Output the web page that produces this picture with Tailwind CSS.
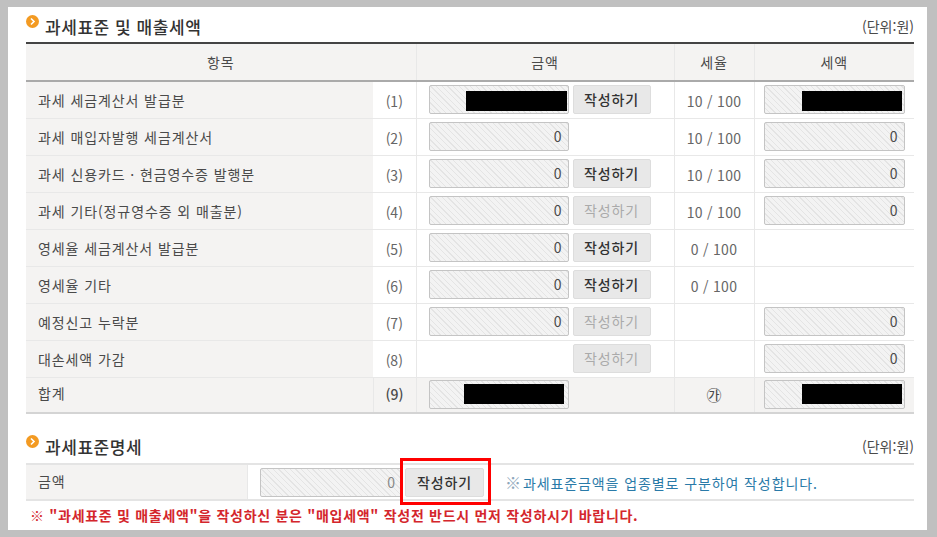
<!DOCTYPE html>
<html lang="ko">
<head>
    <meta charset="UTF-8">
    <title>과세표준 및 매출세액</title>
    <script src="https://cdn.jsdelivr.net/npm/@tailwindcss/browser@4"></script>
</head>
<body class="bg-[#c0c0c0] font-['Noto_Sans_CJK_KR','Noto_Sans',sans-serif] text-[14px] tracking-[0.9px] text-[#4a4a4a]">
    <div class="ml-2 mt-[7px] w-[919px] h-[523px] bg-white pl-[18px] pr-[13px] overflow-hidden">
        <!-- 과세표준 및 매출세액 -->
        <div class="h-[35px] flex justify-between items-end pb-[4px]">
            <div class="flex items-start">
                <svg class="w-[13px] h-[13px] mr-[6px] mt-[-1px]" viewBox="0 0 13 13"><circle cx="6.5" cy="6.5" r="6.5" fill="#f39a22"/><path d="M5 3.5 8 6.5 5 9.5" fill="none" stroke="#fff" stroke-width="1.6"/></svg>
                <h2 class="text-[17px] leading-[22px] font-medium tracking-[0.55px] text-[#333]">과세표준 및 매출세액</h2>
            </div>
            <span class="leading-[20px] tracking-normal mb-[2px]">(단위:원)</span>
        </div>
        <table class="w-[888px] table-fixed border-collapse border-t-2 border-[#444]">
            <colgroup>
                <col class="w-[347px]"><col class="w-[43px]"><col class="w-[258px]"><col class="w-[80px]"><col class="w-[160px]">
            </colgroup>
            <thead>
                <tr class="h-[38px] bg-[#f4f3f2] border-b-2 border-[#aaa] text-center">
                    <th colspan="2" class="font-normal border-r border-[#e8e8e8]">항목</th>
                    <th class="font-normal border-r border-[#e8e8e8]">금액</th>
                    <th class="font-normal border-r border-[#e8e8e8]">세율</th>
                    <th class="font-normal">세액</th>
                </tr>
            </thead>
            <tbody>
                <tr class="h-[37px] border-b border-[#e8e8e8]">
                    <td class="bg-[#f4f3f2] pl-3 pt-[2px]">과세 세금계산서 발급분</td>
                    <td class="text-center pt-[3px] tracking-normal border-r border-[#e8e8e8] text-[#666]">(1)</td>
                    <td class="border-r border-[#e8e8e8] pl-3">
                        <div class="flex gap-1">
                            <div class="relative w-[140px] h-[29px] rounded-[2px] border border-[#c4c4c4] bg-[repeating-linear-gradient(45deg,#f3f3f3,#f3f3f3_3px,#e4e4e4_3px,#e4e4e4_4px)]"><div class="absolute left-[36px] top-[5px] w-[101px] h-[20px] bg-black"></div></div>
                            <button class="w-[78px] h-[29px] rounded-[2px] border border-[#ddd] bg-[#e8e8e8] font-medium text-[#333]">작성하기</button>
                        </div>
                    </td>
                    <td class="text-center pt-[3px] tracking-[0.3px] border-r border-[#e8e8e8] text-[#666]">10 / 100</td>
                    <td class="pl-[9px]">
                        <div class="relative w-[141px] h-[29px] rounded-[2px] border border-[#c4c4c4] bg-[repeating-linear-gradient(45deg,#f3f3f3,#f3f3f3_3px,#e4e4e4_3px,#e4e4e4_4px)]"><div class="absolute left-[37px] top-[5px] w-[100px] h-[20px] bg-black"></div></div>
                    </td>
                </tr>
                <tr class="h-[37px] border-b border-[#e8e8e8]">
                    <td class="bg-[#f4f3f2] pl-3 pt-[2px]">과세 매입자발행 세금계산서</td>
                    <td class="text-center pt-[3px] tracking-normal border-r border-[#e8e8e8] text-[#666]">(2)</td>
                    <td class="border-r border-[#e8e8e8] pl-3">
                        <div class="flex gap-1">
                            <div class="w-[140px] h-[29px] leading-[26px] pr-[5px] text-right rounded-[2px] border border-[#c4c4c4] bg-[repeating-linear-gradient(45deg,#f3f3f3,#f3f3f3_3px,#e4e4e4_3px,#e4e4e4_4px)]">0</div>
                        </div>
                    </td>
                    <td class="text-center pt-[3px] tracking-[0.3px] border-r border-[#e8e8e8] text-[#666]">10 / 100</td>
                    <td class="pl-[9px]">
                        <div class="w-[141px] h-[29px] leading-[26px] pr-[5px] text-right rounded-[2px] border border-[#c4c4c4] bg-[repeating-linear-gradient(45deg,#f3f3f3,#f3f3f3_3px,#e4e4e4_3px,#e4e4e4_4px)]">0</div>
                    </td>
                </tr>
                <tr class="h-[37px] border-b border-[#e8e8e8]">
                    <td class="bg-[#f4f3f2] pl-3 pt-[2px]">과세 신용카드 · 현금영수증 발행분</td>
                    <td class="text-center pt-[3px] tracking-normal border-r border-[#e8e8e8] text-[#666]">(3)</td>
                    <td class="border-r border-[#e8e8e8] pl-3">
                        <div class="flex gap-1">
                            <div class="w-[140px] h-[29px] leading-[26px] pr-[5px] text-right rounded-[2px] border border-[#c4c4c4] bg-[repeating-linear-gradient(45deg,#f3f3f3,#f3f3f3_3px,#e4e4e4_3px,#e4e4e4_4px)]">0</div>
                            <button class="w-[78px] h-[29px] rounded-[2px] border border-[#ddd] bg-[#e8e8e8] font-medium text-[#333]">작성하기</button>
                        </div>
                    </td>
                    <td class="text-center pt-[3px] tracking-[0.3px] border-r border-[#e8e8e8] text-[#666]">10 / 100</td>
                    <td class="pl-[9px]">
                        <div class="w-[141px] h-[29px] leading-[26px] pr-[5px] text-right rounded-[2px] border border-[#c4c4c4] bg-[repeating-linear-gradient(45deg,#f3f3f3,#f3f3f3_3px,#e4e4e4_3px,#e4e4e4_4px)]">0</div>
                    </td>
                </tr>
                <tr class="h-[37px] border-b border-[#e8e8e8]">
                    <td class="bg-[#f4f3f2] pl-3 pt-[2px]">과세 기타(정규영수증 외 매출분)</td>
                    <td class="text-center pt-[3px] tracking-normal border-r border-[#e8e8e8] text-[#666]">(4)</td>
                    <td class="border-r border-[#e8e8e8] pl-3">
                        <div class="flex gap-1">
                            <div class="w-[140px] h-[29px] leading-[26px] pr-[5px] text-right rounded-[2px] border border-[#c4c4c4] bg-[repeating-linear-gradient(45deg,#f3f3f3,#f3f3f3_3px,#e4e4e4_3px,#e4e4e4_4px)]">0</div>
                            <button class="w-[78px] h-[29px] rounded-[2px] border border-[#ddd] bg-[#e8e8e8] text-[#aaa]">작성하기</button>
                        </div>
                    </td>
                    <td class="text-center pt-[3px] tracking-[0.3px] border-r border-[#e8e8e8] text-[#666]">10 / 100</td>
                    <td class="pl-[9px]">
                        <div class="w-[141px] h-[29px] leading-[26px] pr-[5px] text-right rounded-[2px] border border-[#c4c4c4] bg-[repeating-linear-gradient(45deg,#f3f3f3,#f3f3f3_3px,#e4e4e4_3px,#e4e4e4_4px)]">0</div>
                    </td>
                </tr>
                <tr class="h-[37px] border-b border-[#e8e8e8]">
                    <td class="bg-[#f4f3f2] pl-3 pt-[2px]">영세율 세금계산서 발급분</td>
                    <td class="text-center pt-[3px] tracking-normal border-r border-[#e8e8e8] text-[#666]">(5)</td>
                    <td class="border-r border-[#e8e8e8] pl-3">
                        <div class="flex gap-1">
                            <div class="w-[140px] h-[29px] leading-[26px] pr-[5px] text-right rounded-[2px] border border-[#c4c4c4] bg-[repeating-linear-gradient(45deg,#f3f3f3,#f3f3f3_3px,#e4e4e4_3px,#e4e4e4_4px)]">0</div>
                            <button class="w-[78px] h-[29px] rounded-[2px] border border-[#ddd] bg-[#e8e8e8] font-medium text-[#333]">작성하기</button>
                        </div>
                    </td>
                    <td class="text-center pt-[3px] tracking-[0.3px] border-r border-[#e8e8e8] text-[#666]">0 / 100</td>
                    <td></td>
                </tr>
                <tr class="h-[37px] border-b border-[#e8e8e8]">
                    <td class="bg-[#f4f3f2] pl-3 pt-[2px]">영세율 기타</td>
                    <td class="text-center pt-[3px] tracking-normal border-r border-[#e8e8e8] text-[#666]">(6)</td>
                    <td class="border-r border-[#e8e8e8] pl-3">
                        <div class="flex gap-1">
                            <div class="w-[140px] h-[29px] leading-[26px] pr-[5px] text-right rounded-[2px] border border-[#c4c4c4] bg-[repeating-linear-gradient(45deg,#f3f3f3,#f3f3f3_3px,#e4e4e4_3px,#e4e4e4_4px)]">0</div>
                            <button class="w-[78px] h-[29px] rounded-[2px] border border-[#ddd] bg-[#e8e8e8] font-medium text-[#333]">작성하기</button>
                        </div>
                    </td>
                    <td class="text-center pt-[3px] tracking-[0.3px] border-r border-[#e8e8e8] text-[#666]">0 / 100</td>
                    <td></td>
                </tr>
                <tr class="h-[37px] border-b border-[#e8e8e8]">
                    <td class="bg-[#f4f3f2] pl-3 pt-[2px]">예정신고 누락분</td>
                    <td class="text-center pt-[3px] tracking-normal border-r border-[#e8e8e8] text-[#666]">(7)</td>
                    <td class="border-r border-[#e8e8e8] pl-3">
                        <div class="flex gap-1">
                            <div class="w-[140px] h-[29px] leading-[26px] pr-[5px] text-right rounded-[2px] border border-[#c4c4c4] bg-[repeating-linear-gradient(45deg,#f3f3f3,#f3f3f3_3px,#e4e4e4_3px,#e4e4e4_4px)]">0</div>
                            <button class="w-[78px] h-[29px] rounded-[2px] border border-[#ddd] bg-[#e8e8e8] text-[#aaa]">작성하기</button>
                        </div>
                    </td>
                    <td class="border-r border-[#e8e8e8]"></td>
                    <td class="pl-[9px]">
                        <div class="w-[141px] h-[29px] leading-[26px] pr-[5px] text-right rounded-[2px] border border-[#c4c4c4] bg-[repeating-linear-gradient(45deg,#f3f3f3,#f3f3f3_3px,#e4e4e4_3px,#e4e4e4_4px)]">0</div>
                    </td>
                </tr>
                <tr class="h-[37px] border-b border-[#e8e8e8]">
                    <td class="bg-[#f4f3f2] pl-3 pt-[2px]">대손세액 가감</td>
                    <td class="text-center pt-[3px] tracking-normal border-r border-[#e8e8e8] text-[#666]">(8)</td>
                    <td class="border-r border-[#e8e8e8] pl-3">
                        <div class="flex gap-1">
                            <div class="w-[140px] h-[29px]"></div>
                            <button class="w-[78px] h-[29px] rounded-[2px] border border-[#ddd] bg-[#e8e8e8] text-[#aaa]">작성하기</button>
                        </div>
                    </td>
                    <td class="border-r border-[#e8e8e8]"></td>
                    <td class="pl-[9px]">
                        <div class="w-[141px] h-[29px] leading-[26px] pr-[5px] text-right rounded-[2px] border border-[#c4c4c4] bg-[repeating-linear-gradient(45deg,#f3f3f3,#f3f3f3_3px,#e4e4e4_3px,#e4e4e4_4px)]">0</div>
                    </td>
                </tr>
                <tr class="h-[36px] bg-[#f4f3f2] border-b-2 border-[#d4d4d4]">
                    <td class="pl-3 pb-[2px] border-r border-[#e8e8e8]">합계</td>
                    <td class="text-center tracking-normal font-medium border-r border-[#e8e8e8]">(9)</td>
                    <td class="border-r border-[#e8e8e8] pl-3">
                        <div class="relative w-[140px] h-[29px] rounded-[2px] border border-[#c4c4c4] bg-[repeating-linear-gradient(45deg,#f3f3f3,#f3f3f3_3px,#e4e4e4_3px,#e4e4e4_4px)]"><div class="absolute left-[34px] top-[3px] w-[100px] h-[20px] bg-black"></div></div>
                    </td>
                    <td class="text-center text-[15px] tracking-normal border-r border-[#e8e8e8]">㉮</td>
                    <td class="pl-[9px]">
                        <div class="relative w-[141px] h-[29px] rounded-[2px] border border-[#c4c4c4] bg-[repeating-linear-gradient(45deg,#f3f3f3,#f3f3f3_3px,#e4e4e4_3px,#e4e4e4_4px)]"><div class="absolute left-[37px] top-[3px] w-[100px] h-[20px] bg-black"></div></div>
                    </td>
                </tr>
            </tbody>
        </table>

        <!-- 과세표준명세 -->
        <div class="h-[49px] flex justify-between items-end pb-[5px]">
            <div class="flex items-start">
                <svg class="w-[13px] h-[13px] mr-[6px] mt-[-1px]" viewBox="0 0 13 13"><circle cx="6.5" cy="6.5" r="6.5" fill="#f39a22"/><path d="M5 3.5 8 6.5 5 9.5" fill="none" stroke="#fff" stroke-width="1.6"/></svg>
                <h2 class="text-[17px] leading-[22px] font-medium tracking-[0.55px] text-[#333]">과세표준명세</h2>
            </div>
            <span class="leading-[20px] tracking-normal mb-[2px]">(단위:원)</span>
        </div>
        <div class="w-[888px] h-[38px] flex items-center border-y-2 border-[#e4e4e4]">
            <div class="w-[222px] h-full flex items-center pl-3 pb-[2px] bg-[#f4f3f2] border-r border-[#e8e8e8]">금액</div>
            <div class="w-[142px] h-[29px] ml-3 leading-[26px] pr-[5px] text-right text-[#888] rounded-[2px] border border-[#c4c4c4] bg-[repeating-linear-gradient(45deg,#f3f3f3,#f3f3f3_3px,#e4e4e4_3px,#e4e4e4_4px)]">0</div>
            <button class="relative w-[79px] h-[29px] ml-[3px] rounded-[2px] border border-[#ddd] bg-[#e8e8e8] font-medium text-[#333]">작성하기<span class="absolute left-[-6px] top-[-11px] w-[91px] h-[47px] border-[3px] border-[#f00]"></span></button>
            <p class="ml-[21px] text-[#2a7aa8]"><span class="text-[#8fa8bc] text-[16px] mr-[1px]">※</span>과세표준금액을 업종별로 구분하여 작성합니다.</p>
        </div>
        <p class="pl-[4px] mt-[4px] leading-[20px] font-bold tracking-[0.7px] text-[#d4262c]">※ "과세표준 및 매출세액"을 작성하신 분은 "매입세액" 작성전 반드시 먼저 작성하시기 바랍니다.</p>
    </div>
</body>
</html>
